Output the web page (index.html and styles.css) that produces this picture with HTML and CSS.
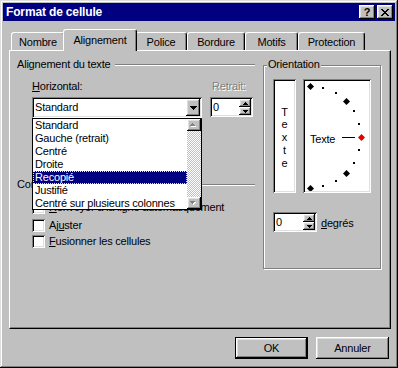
FILE: index.html
```html
<!DOCTYPE html>
<html lang="fr">

<head>
  <meta charset="UTF-8">
  <title>Format de cellule</title>
  <link rel="stylesheet" href="styles.css">
</head>

<body>
  <div class="window">
    <div class="titlebar">
      <span class="title">Format de cellule</span>
      <div class="title-buttons">
        <span class="tbtn raised">?</span>
        <span class="tbtn raised">
          <svg width="8" height="7" viewBox="0 0 8 7"><path d="M0 0h2v1h1v1h2V1h1V0h2v1H7v1H6v1H5v1h1v1h1v1h1v1H6V6H5V5H3v1H2v1H0V6h1V5h1V4h1V3H2V2H1V1H0z"/></svg>
        </span>
      </div>
    </div>

    <div class="content">
      <div class="tabs">
        <div class="tab tab-nombre">Nombre</div>
        <div class="tab tab-align active">Alignement</div>
        <div class="tab tab-police">Police</div>
        <div class="tab tab-bordure">Bordure</div>
        <div class="tab tab-motifs">Motifs</div>
        <div class="tab tab-protect">Protection</div>
      </div>

      <div class="panel">
        <div class="col-left">
          <div class="group-head"><span>Alignement du texte</span><i class="etch"></i></div>

          <div class="fields">
            <div class="field field-h">
              <label><u>H</u>orizontal:</label>
              <div class="combo">
                <span class="val">Standard</span>
                <span class="drop raised">
                  <svg width="7" height="4" viewBox="0 0 7 4"><path d="M0 0h7v1H6v1H5v1H4v1H3V3H2V2H1V1H0z"/></svg>
                </span>
              </div>

              <div class="listbox">
                <ul class="items">
                  <li>Standard</li>
                  <li>Gauche (retrait)</li>
                  <li>Centré</li>
                  <li>Droite</li>
                  <li class="sel">Recopié</li>
                  <li>Justifié</li>
                  <li>Centré sur plusieurs colonnes</li>
                </ul>
                <div class="scrollbar">
                  <span class="sb-btn raised">
                    <svg width="8" height="5" viewBox="0 0 8 5"><path fill="#fff" d="M3 1h1v1h1v1h1v1H1V3h1V2h1z"/><path fill="#808080" d="M2 0h1v1h1v1h1v1H0V2h1V1h1z"/></svg>
                  </span>
                  <span class="sb-track"></span>
                  <span class="sb-btn raised">
                    <svg width="8" height="5" viewBox="0 0 8 5"><path fill="#fff" d="M1 1h5v1H5v1H4v1H3V3H2V2H1z"/><path fill="#808080" d="M0 0h5v1H4v1H3v1H2V2H1V1H0z"/></svg>
                  </span>
                </div>
              </div>
            </div>

            <div class="field field-r">
              <label class="disabled">Retrait:</label>
              <div class="spin">
                <span class="val">0</span>
                <span class="spin-btns">
                  <b class="raised"><svg width="5" height="3" viewBox="0 0 5 3"><path d="M2 0h1v1h1v1h1v1H0V2h1V1h1z"/></svg></b>
                  <b class="raised"><svg width="5" height="3" viewBox="0 0 5 3"><path d="M0 0h5v1H4v1H3v1H2V2H1V1H0z"/></svg></b>
                </span>
              </div>
            </div>
          </div>

          <div class="group-head group-ctrl"><span>Contrôle du texte</span><i class="etch"></i></div>

          <div class="checks">
            <div class="check first"><span class="cbox"></span><span><u>R</u>envoyer à la ligne automatiquement</span></div>
            <div class="check"><span class="cbox"></span><span>Aj<u>u</u>ster</span></div>
            <div class="check"><span class="cbox"></span><span><u>F</u>usionner les cellules</span></div>
          </div>
        </div>

        <div class="orient">
          <div class="orient-title">Orientation</div>
          <div class="orient-row">
            <div class="vtext">
              <span>T</span><span>e</span><span>x</span><span>t</span><span>e</span>
            </div>
            <div class="dial">
              <svg width="64" height="110" viewBox="0 0 64 110">
                <defs>
                  <path id="dm" d="M0 -3.5 3.5 0 0 3.5 -3.5 0z"/>
                </defs>
                <g fill="#000">
                  <use href="#dm" x="5.5" y="5.5"/>
                  <rect x="17" y="6" width="2" height="2"/>
                  <rect x="30" y="11" width="2" height="2"/>
                  <use href="#dm" x="41.5" y="20.5"/>
                  <rect x="48" y="29" width="2" height="2"/>
                  <rect x="53" y="42" width="2" height="2"/>
                  <rect x="53" y="68" width="2" height="2"/>
                  <rect x="48" y="81" width="2" height="2"/>
                  <use href="#dm" x="41.5" y="92.5"/>
                  <rect x="30" y="99" width="2" height="2"/>
                  <rect x="17" y="104" width="2" height="2"/>
                  <use href="#dm" x="5.5" y="107.5"/>
                  <rect x="37" y="56" width="13" height="1"/>
                </g>
                <use href="#dm" x="56.5" y="56.5" fill="#e00000"/>
                <text x="5" y="62" class="dial-text">Texte</text>
              </svg>
            </div>
          </div>

          <div class="deg-row">
            <div class="spin spin-deg">
              <span class="val">0</span>
              <span class="spin-btns">
                <b class="raised"><svg width="5" height="3" viewBox="0 0 5 3"><path d="M2 0h1v1h1v1h1v1H0V2h1V1h1z"/></svg></b>
                <b class="raised"><svg width="5" height="3" viewBox="0 0 5 3"><path d="M0 0h5v1H4v1H3v1H2V2H1V1H0z"/></svg></b>
              </span>
            </div>
            <span class="deg-label"><u>d</u>egrés</span>
          </div>
        </div>
      </div>

      <div class="footer">
        <div class="btn default">OK</div>
        <div class="btn">Annuler</div>
      </div>
    </div>
  </div>
</body>

</html>
```

FILE: styles.css
```css
* {
  box-sizing: border-box;
  margin: 0;
  padding: 0;
}

body {
  background: #c0c0c0;
  color: #000;
  font-family: "Liberation Sans", Arial, sans-serif;
  font-size: 11px;
  letter-spacing: -0.2px;
}

u {
  text-decoration: underline;
  text-underline-offset: 1px;
}

svg {
  display: block;
}

.raised {
  background: #c0c0c0;
  box-shadow: inset -1px -1px #000, inset 1px 1px #fff, inset -2px -2px #808080, inset 2px 2px #dfdfdf;
}

.window {
  width: 398px;
  height: 368px;
  padding: 3px;
  background: #c0c0c0;
  box-shadow: inset -1px -1px #000, inset 1px 1px #dfdfdf, inset -2px -2px #808080, inset 2px 2px #fff;
}

/* title bar */
.titlebar {
  height: 18px;
  background: #000080;
  color: #fff;
  display: flex;
  align-items: center;
  justify-content: space-between;
  padding: 0 2px 0 3px;
}

.title {
  font-weight: bold;
  font-size: 12px;
  letter-spacing: -0.15px;
}

.title-buttons {
  display: flex;
  gap: 2px;
}

.tbtn {
  width: 16px;
  height: 14px;
  display: flex;
  align-items: center;
  justify-content: center;
  color: #000;
  font-weight: bold;
  font-size: 11px;
  line-height: 14px;
}

/* tabs */
.content {
  padding: 0 4px 0 6px;
}

.tabs {
  display: flex;
  align-items: flex-end;
  height: 29px;
  padding-left: 2px;
}

.tab {
  height: 18px;
  padding-top: 3px;
  line-height: 13px;
  text-align: center;
  border: 1px solid;
  border-color: #fff #000 transparent #fff;
  border-bottom: 0;
  border-radius: 3px 3px 0 0;
  box-shadow: inset -1px 0 #808080;
}

.tab.active {
  height: 22px;
  padding-top: 4px;
  margin: 0 -2px -1px;
  position: relative;
  background: #c0c0c0;
}

.tab-nombre { width: 54px; }
.tab-align { width: 74px; }
.tab-police { width: 52px; }
.tab-bordure { width: 58px; }
.tab-motifs { width: 53px; }
.tab-protect { width: 67px; }

/* panel */
.panel {
  height: 279px;
  border: 1px solid;
  border-color: #fff #000 #000 #fff;
  box-shadow: inset -1px -1px #808080;
  display: grid;
  grid-template-columns: 238px 118px;
  column-gap: 8px;
  align-items: start;
  padding: 7px 0 0 7px;
}

.group-head {
  display: flex;
  align-items: center;
  gap: 5px;
  line-height: 13px;
}

.etch {
  flex: 1;
  height: 2px;
  border-top: 1px solid #808080;
  border-bottom: 1px solid #fff;
}

.fields {
  display: flex;
  gap: 8px;
  margin: 9px 0 0 15px;
}

.field {
  display: flex;
  flex-direction: column;
  gap: 4px;
  line-height: 13px;
}

.field-h {
  width: 170px;
  position: relative;
}

.field-r {
  width: 43px;
}

.disabled {
  padding-left: 2px;
  color: #808080;
  text-shadow: 1px 1px #fff;
}

.group-ctrl {
  margin-top: 60px;
}

/* inputs */
.combo,
.spin,
.vtext,
.dial {
  background: #fff;
  padding: 2px;
  box-shadow: inset 1px 1px #808080, inset -1px -1px #fff, inset 2px 2px #000, inset -2px -2px #dfdfdf;
}

.combo {
  height: 21px;
  display: flex;
  justify-content: space-between;
}

.combo .val,
.spin .val {
  padding-left: 1px;
  align-self: center;
}

.drop {
  width: 14px;
  display: flex;
  align-items: center;
  justify-content: center;
}

.spin {
  height: 20px;
  display: flex;
  justify-content: space-between;
}

.field-r .spin {
  width: 43px;
}

.spin-deg {
  width: 44px;
}

.spin-btns {
  width: 12px;
  display: flex;
  flex-direction: column;
}

.spin-btns b {
  flex: 1;
  display: flex;
  align-items: center;
  justify-content: center;
}

/* open list */
.listbox {
  position: absolute;
  top: 100%;
  left: 0;
  width: 170px;
  height: 92px;
  border: 1px solid #000;
  background: #fff;
  display: flex;
  z-index: 2;
}

.items {
  flex: 1;
  list-style: none;
}

.items li {
  height: 13px;
  line-height: 13px;
  padding-left: 2px;
  white-space: nowrap;
}

.items li.sel {
  background: #000080;
  color: #fff;
  outline: 1px dotted #ff0;
  outline-offset: -1px;
}

.scrollbar {
  width: 14px;
  display: flex;
  flex-direction: column;
  background: repeating-conic-gradient(#c0c0c0 0 25%, #fff 0 50%) 0 0 / 2px 2px;
}

.sb-btn {
  height: 12px;
  display: flex;
  align-items: center;
  justify-content: center;
}

.sb-track {
  flex: 1;
}

/* checkboxes */
.checks {
  margin: 8px 0 0 15px;
}

.check {
  display: flex;
  align-items: center;
  gap: 4px;
  height: 16px;
  white-space: nowrap;
}

.check.first {
  margin-bottom: 2px;
}

.cbox {
  width: 13px;
  height: 13px;
  background: #fff;
  box-shadow: inset 1px 1px #808080, inset -1px -1px #fff, inset 2px 2px #000, inset -2px -2px #dfdfdf;
}

/* orientation */
.orient {
  margin-top: 7px;
  height: 204px;
  border: 1px solid #808080;
  box-shadow: inset 1px 1px #fff, 1px 1px #fff;
  padding-left: 9px;
}

.orient-title {
  display: table;
  margin: -8px 0 0 -6px;
  padding: 0 1px;
  background: #c0c0c0;
  line-height: 13px;
}

.orient-row {
  display: flex;
  gap: 7px;
  margin-top: 8px;
}

.vtext {
  width: 23px;
  height: 114px;
  display: flex;
  flex-direction: column;
  align-items: center;
  justify-content: center;
  padding-top: 5px;
  line-height: 12.75px;
}

.dial {
  width: 68px;
  height: 114px;
}

.dial-text {
  font-family: "Liberation Sans", Arial, sans-serif;
  font-size: 11px;
  letter-spacing: -0.2px;
}

.deg-row {
  display: flex;
  align-items: center;
  gap: 4px;
  margin-top: 19px;
}

.deg-label {
  padding-top: 2px;
}

/* buttons */
.footer {
  display: flex;
  justify-content: flex-end;
  gap: 8px;
  padding: 8px 2px 0 0;
}

.btn {
  width: 73px;
  height: 22px;
  display: flex;
  align-items: center;
  justify-content: center;
  background: #c0c0c0;
  box-shadow: inset -1px -1px #000, inset 1px 1px #fff, inset -2px -2px #808080, inset 2px 2px #dfdfdf;
}

.btn.default {
  border: 1px solid #000;
}
```
